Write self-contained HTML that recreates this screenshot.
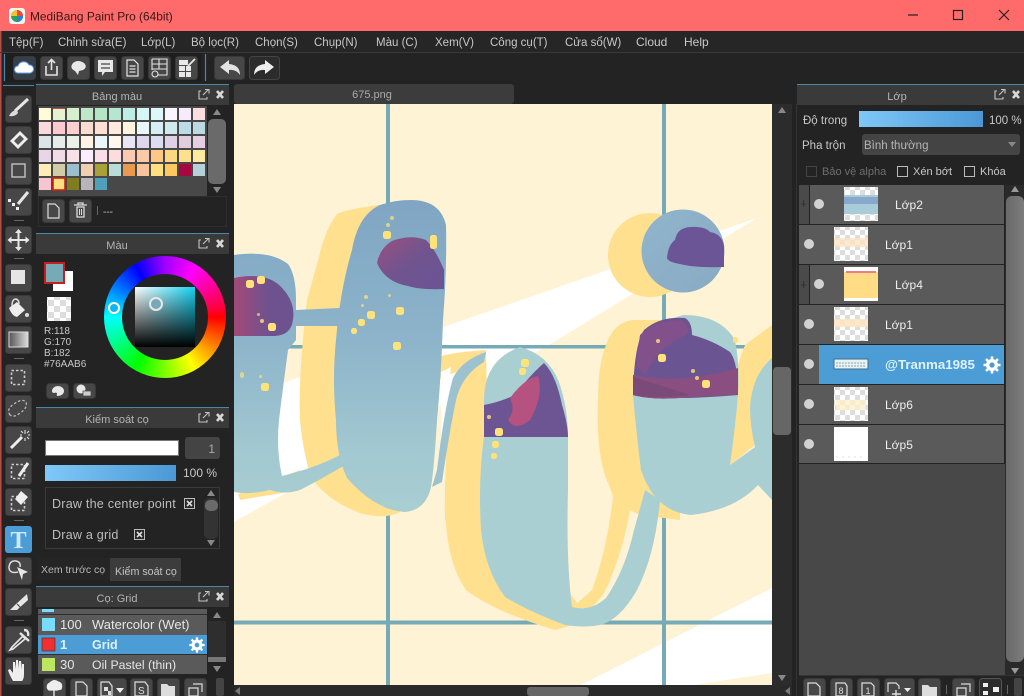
<!DOCTYPE html>
<html><head><meta charset="utf-8"><style>
html,body{margin:0;padding:0;width:1024px;height:696px;overflow:hidden;background:#232323}
svg{position:absolute;left:0;top:0}
text{font-family:"Liberation Sans","DejaVu Sans",sans-serif;font-size:12px;fill:#c8c8c8}
.m text{font-size:11.5px}
.b{fill:#474747;stroke:#383838;stroke-width:1}
.h{fill:#3a3a3a}
.t{font-size:11px;fill:#b4b4b4;text-anchor:middle}
.i{fill:none;stroke:#e4e4e4;stroke-width:1.6}
.f{fill:#e8e8e8}
.l{font-size:12px;fill:#eee}
.n{font-size:13px;fill:#e6e6e6}
.d rect{rx:2.5px}
#wheel{position:absolute;left:104px;top:256px;width:122px;height:122px;border-radius:50%;background:conic-gradient(from 0deg,#a000ff,#ff00ff 30deg,#ff0040 80deg,#f00 90deg,#ff0 150deg,#0f0 210deg,#0ff 270deg,#00f 330deg,#a000ff 360deg)}
#wi{position:absolute;left:18px;top:18px;width:86px;height:86px;border-radius:50%;background:#232323}
#sq{position:absolute;left:31px;top:31px;width:60px;height:60px;background:linear-gradient(to bottom,rgba(0,0,0,0),#000),linear-gradient(to right,#fff,#14d2f2)}
.p{position:absolute;border:2.5px solid #eee;border-radius:50%;box-sizing:border-box}
</style></head><body>
<svg width="1024" height="696" viewBox="0 0 1024 696">
<defs>
<linearGradient id="bar" x1="0" x2="1" y1="0" y2="0"><stop offset="0" stop-color="#7fc8f8"/><stop offset="1" stop-color="#4b98d6"/></linearGradient>
<linearGradient id="sb" x1="0" x2="1" y1="0" y2="0"><stop offset="0" stop-color="#6a6a6a"/><stop offset="1" stop-color="#7c7c7c"/></linearGradient>
<linearGradient id="blue" x1="0" x2="0" y1="195" y2="520" gradientUnits="userSpaceOnUse"><stop offset="0" stop-color="#7fa5c3"/><stop offset=".45" stop-color="#8db4ca"/><stop offset=".8" stop-color="#a3c9d1"/><stop offset="1" stop-color="#a9cfd2"/></linearGradient>
<linearGradient id="circ" x1="0" x2="1" y1="0" y2="1"><stop offset="0" stop-color="#8fb5cb"/><stop offset="1" stop-color="#8aaac4"/></linearGradient>
<linearGradient id="pur" x1="0" x2="1" y1="0" y2="1"><stop offset="0" stop-color="#9a4f80"/><stop offset=".5" stop-color="#70548f"/><stop offset="1" stop-color="#6a5494"/></linearGradient>
<linearGradient id="pur2" x1="0" x2="1" y1="0" y2="0"><stop offset="0" stop-color="#a24a78"/><stop offset=".6" stop-color="#6e5290"/></linearGradient>
<linearGradient id="grad" x1="0" x2="1" y1="0" y2="0"><stop offset="0" stop-color="#555"/><stop offset="1" stop-color="#ddd"/></linearGradient>
<pattern id="ck" width="12" height="12" patternUnits="userSpaceOnUse"><rect width="12" height="12" fill="#fff"/><rect width="6" height="6" fill="#ddd"/><rect x="6" y="6" width="6" height="6" fill="#ddd"/></pattern>
<pattern id="ck2" width="10" height="10" patternUnits="userSpaceOnUse"><rect width="10" height="10" fill="#fff"/><rect width="5" height="5" fill="#ddd"/><rect x="5" y="5" width="5" height="5" fill="#ddd"/></pattern>
<g id="pop"><path d="M-5 -3H-7V5H1V3" fill="none" stroke="#c4c4c4" stroke-width="1.1"/><path d="M-3 1L2 -4M-1 -4.500H3V-.5" fill="none" stroke="#c4c4c4" stroke-width="1.1"/><path d="M11 -3L17 4M17 -3L11 4" stroke="#d8d8d8" stroke-width="2.6"/></g>
<g id="gear"><circle r="6" fill="#fff"/><g stroke="#fff" stroke-width="2.6"><path d="M0 -8.500V8.500M-8.500 0H8.500M-6 -6L6 6M-6 6L6 -6"/></g><circle r="2.600" fill="#4c9cd6"/></g>
</defs>

<!-- window frame -->
<rect width="1024" height="696" fill="#232323"/>
<rect width="1024" height="31" fill="#ff6b6b"/>
<rect x="0" y="31" width="1.5" height="665" fill="#b84a4a"/>
<rect x="9" y="8" width="16" height="16" rx="3" fill="#f4f4f4"/>
<circle cx="17" cy="16" r="6" fill="#2ea05a"/><path d="M17 10a6 6 0 0 1 6 6h-6z" fill="#e84b3a"/><path d="M17 16h6a6 6 0 0 1-6 6z" fill="#2f7fd0"/><path d="M11 16a6 6 0 0 1 6-6v6z" fill="#f2c230"/>
<text x="30" y="20.500" style="font-size:11.900px;fill:#3a1515">MediBang Paint Pro (64bit)</text>
<path d="M908 15H918" stroke="#222" stroke-width="1.2"/><rect x="953.5" y="10.5" width="9" height="9" fill="none" stroke="#222" stroke-width="1.2"/><path d="M999 10L1009 20M1009 10L999 20" stroke="#222" stroke-width="1.2"/>

<!-- menu -->
<rect y="31" width="1024" height="21" x="1.5" fill="#262626"/>
<path d="M0 52.500H1024" stroke="#3a3a3a"/>
<g class="m"><text x="9" y="46">Tệp(F)</text><text x="58" y="46">Chỉnh sửa(E)</text><text x="141" y="46">Lớp(L)</text><text x="191" y="46">Bộ lọc(R)</text><text x="255" y="46">Chọn(S)</text><text x="314" y="46">Chụp(N)</text><text x="376" y="46">Màu (C)</text><text x="435" y="46">Xem(V)</text><text x="490" y="46">Công cụ(T)</text><text x="565" y="46">Cửa sổ(W)</text></g><text x="636" y="46">Cloud</text><text x="684" y="46">Help</text>

<!-- toolbar -->
<rect x="5" y="53" width="196" height="29" fill="#1e1e1e"/>
<path d="M4.500 54V81M205.500 54V81" stroke="#4a88aa" stroke-width="1.2"/>
<g class="tb">
<rect class="b" x="13.500" y="56.500" width="22" height="23" rx="3" style="fill:#353f4a"/>
<path d="M18 73a3.500 3.500 0 0 1 0-7a6 6 0 0 1 11-1a4 4 0 0 1 1 8z" fill="#fff" stroke="#6aa6e8" stroke-width="1"/>
<rect class="b" x="40.500" y="56.500" width="22" height="23" rx="3"/>
<path d="M46 66V75H57V66M51.500 70V60M48 63L51.500 59.500L55 63" class="i"/>
<rect class="b" x="67.500" y="56.500" width="22" height="23" rx="3"/>
<path d="M73 63q5-4 11 0q4 4-1 7l-4 1l-1 4l-3-4q-6-3-2-8z" class="f"/>
<rect class="b" x="94.500" y="56.500" width="22" height="23" rx="3"/>
<path d="M98 60H113V72H105L102 76V72H98z" class="f"/><path d="M101 64H110M101 68H110" stroke="#444" stroke-width="1.2"/>
<rect class="b" x="121.500" y="56.500" width="22" height="23" rx="3"/>
<path d="M127 60H134L138 64V76H127z M129.500 66H135.500M129.500 69H135.500M129.500 72H135.500" class="i" style="stroke-width:1.2"/>
<rect class="b" x="148.500" y="56.500" width="22" height="23" rx="3"/>
<path d="M152 59H167V75H158M152 59V70M152 64H167M152 69H167M159 59V69" class="i" style="stroke-width:1.1"/><circle cx="155" cy="74" r="3" fill="none" stroke="#e4e4e4" stroke-width="1.1"/>
<rect class="b" x="175.500" y="56.500" width="22" height="23" rx="3"/>
<path d="M179 66H185V71H179zM186 66H191V71H186zM179 72H185V77H179zM186 72H191V77H186zM179 60H188V65H179z" class="f"/><path d="M188 66L195 59" stroke="#e8e8e8" stroke-width="1.8"/>
<rect class="b" x="214.500" y="56.500" width="30" height="23" rx="3"/>
<path d="M220 67L229 60V64Q240 65 240 75Q236 69 229 70V74z" fill="#e4e4e4"/>
<rect class="b" x="249.500" y="56.500" width="30" height="23" rx="3" style="fill:#2c2c2c;stroke:#444"/>
<path d="M274 67L265 60V64Q254 65 254 75Q258 69 265 70V74z" fill="#eee"/>
</g>

<!-- left tool column -->
<path d="M3 85.500H34" stroke="#4a88aa"/>
<rect class="b" x="5.500" y="95.500" width="26" height="27" rx="3"/>
<path d="M28 99L15 111" stroke="#e8e8e8" stroke-width="3"/><path d="M9 116q3-6 8-6l1 3q-3 4-9 3z" fill="#ddd"/>
<rect class="b" x="5.500" y="126.500" width="26" height="27" rx="3"/>
<path d="M20 131L28 139L18 149L10 141z" fill="#eee"/><path d="M20 135L24 139L18 145L14 141z" fill="#555"/>
<rect class="b" x="5.500" y="157.500" width="26" height="27" rx="3"/>
<rect x="12" y="164" width="13" height="13" fill="none" stroke="#bbb" stroke-width="1.5"/>
<rect class="b" x="5.500" y="188.500" width="26" height="27" rx="3"/>
<path d="M28 192L18 204" stroke="#e6e6e6" stroke-width="3"/><rect x="8" y="199" width="3" height="3" fill="#eee"/><rect x="12" y="203" width="3" height="3" fill="#eee"/><rect x="16" y="207" width="3" height="3" fill="#eee"/>
<path d="M14 220.500H24" stroke="#666"/>
<rect class="b" x="5.500" y="226.500" width="26" height="27" rx="3"/>
<path d="M18.500 230V250M8.500 240H28.500" stroke="#e8e8e8" stroke-width="2"/><path d="M18.500 229L15 233H22zM18.500 251L15 247H22zM7.500 240L11.500 236.500V243.500zM29.500 240L25.500 236.500V243.500z" fill="#e8e8e8"/>
<path d="M14 258.500H24" stroke="#666"/>
<rect class="b" x="5.500" y="264.500" width="26" height="27" rx="3"/>
<rect x="11" y="270" width="14" height="14" fill="#e6e6e6"/>
<rect class="b" x="5.500" y="295.500" width="26" height="27" rx="3"/>
<path d="M9 308L17 302L25 310L17 317Q12 316 9 308z" fill="#eee"/><path d="M12 306Q12 299 16 299Q19 300 19 304" fill="none" stroke="#ddd" stroke-width="1.5"/><circle cx="27" cy="315" r="2" fill="#ddd"/>
<rect class="b" x="5.500" y="326.500" width="26" height="27" rx="3"/>
<rect x="9" y="332" width="19" height="15" fill="url(#grad)" stroke="#ddd"/>
<path d="M14 358.500H24" stroke="#666"/>
<rect class="b" x="5.500" y="364.500" width="26" height="27" rx="3"/>
<rect x="11.500" y="370.500" width="13" height="14" fill="none" stroke="#ccc" stroke-width="1.6" stroke-dasharray="2.500 2"/>
<rect class="b" x="5.500" y="395.500" width="26" height="27" rx="3"/>
<path d="M10 415Q6 409 14 404Q22 398 26 402Q28 408 20 413Q14 418 10 415z" fill="none" stroke="#bbb" stroke-width="1.3" stroke-dasharray="2.500 2"/>
<rect class="b" x="5.500" y="426.500" width="26" height="27" rx="3"/>
<path d="M11 448L22 437" stroke="#eee" stroke-width="3"/><path d="M25 430V434M25 438V441M20 435H22M28 435H30M21 431L23 433M27 437L29 439M29 431L27 433" stroke="#ddd" stroke-width="1.1"/>
<rect class="b" x="5.500" y="457.500" width="26" height="27" rx="3"/>
<rect x="11.500" y="464.500" width="13" height="14" fill="none" stroke="#ccc" stroke-width="1.6" stroke-dasharray="2.500 2"/><path d="M19 476L28 463" stroke="#eee" stroke-width="3"/>
<rect class="b" x="5.500" y="488.500" width="26" height="27" rx="3"/>
<rect x="11.500" y="496.500" width="13" height="14" fill="none" stroke="#ccc" stroke-width="1.6" stroke-dasharray="2.500 2"/><path d="M21 491L28 497L21 505L15 499z" fill="#eee"/>
<path d="M14 520.500H24" stroke="#666"/>
<rect x="5" y="526" width="27" height="27" rx="3" fill="#4c9cd6"/>
<text x="18.500" y="548" style="font-family:'Liberation Serif',serif;font-size:24px;font-weight:bold;fill:#cfeaff;text-anchor:middle">T</text>
<rect class="b" x="5.500" y="557.500" width="26" height="27" rx="3"/>
<path d="M18 572Q9 574 9 567Q10 560 16 561Q21 562 20 567" fill="none" stroke="#ddd" stroke-width="1.5"/><path d="M17 567L28 572L23 574L22 580z" fill="#e8e8e8"/>
<rect class="b" x="5.500" y="588.500" width="26" height="27" rx="3"/>
<path d="M27 594L15 605L10 610L17 610L28 600z" fill="#e6e6e6"/><path d="M17 604L22 609" stroke="#444"/>
<path d="M14 620.500H24" stroke="#666"/>
<rect class="b" x="5.500" y="626.500" width="26" height="27" rx="3"/>
<path d="M23 636L12 647L10 650L13 649L25 639z" fill="none" stroke="#e6e6e6" stroke-width="1.6"/><path d="M20 633L29 641M24 630Q29 630 28 636" stroke="#e6e6e6" stroke-width="2.4" fill="none"/>
<rect class="b" x="5.500" y="657.500" width="26" height="27" rx="3"/>
<path d="M13 681Q9 674 8 670L10 669L13 673V662H15L16 669V660H18L19 669V661H21L22 670V664H24V674Q24 679 22 681z" fill="#eee"/>

<!-- Palette panel -->
<path d="M36 84.500H229" stroke="#4a88aa"/>
<rect class="h" x="36" y="85" width="193" height="20"/>
<text class="t" x="117" y="100">Bảng màu</text>
<use href="#pop" x="206" y="94"/>
<rect x="38" y="106" width="169" height="90" fill="#484848"/>
<g>
<rect x="39" y="108" width="12" height="12" fill="#fffbd9"/><rect x="53" y="108" width="12" height="12" fill="#e4f2d2"/><rect x="67" y="108" width="12" height="12" fill="#d6f0ce"/><rect x="81" y="108" width="12" height="12" fill="#bfe8c9"/><rect x="95" y="108" width="12" height="12" fill="#b4e6c5"/><rect x="109" y="108" width="12" height="12" fill="#b5e6d0"/><rect x="123" y="108" width="12" height="12" fill="#bdeee6"/><rect x="137" y="108" width="12" height="12" fill="#d6f6f6"/><rect x="151" y="108" width="12" height="12" fill="#def7fa"/><rect x="165" y="108" width="12" height="12" fill="#f8f6fe"/><rect x="179" y="108" width="12" height="12" fill="#f6eafb"/><rect x="193" y="108" width="12" height="12" fill="#fbdde0"/>
<rect x="39" y="122" width="12" height="12" fill="#fbd8dc"/><rect x="53" y="122" width="12" height="12" fill="#fbc9cf"/><rect x="67" y="122" width="12" height="12" fill="#fbd0ce"/><rect x="81" y="122" width="12" height="12" fill="#fbdcd0"/><rect x="95" y="122" width="12" height="12" fill="#fde0d2"/><rect x="109" y="122" width="12" height="12" fill="#feeadc"/><rect x="123" y="122" width="12" height="12" fill="#fff4de"/><rect x="137" y="122" width="12" height="12" fill="#e8f8fa"/><rect x="151" y="122" width="12" height="12" fill="#d6eef3"/><rect x="165" y="122" width="12" height="12" fill="#cfe9ee"/><rect x="179" y="122" width="12" height="12" fill="#bbdce6"/><rect x="193" y="122" width="12" height="12" fill="#bad9e0"/>
<rect x="39" y="136" width="12" height="12" fill="#dce6e8"/><rect x="53" y="136" width="12" height="12" fill="#e6ede9"/><rect x="67" y="136" width="12" height="12" fill="#edf0e9"/><rect x="81" y="136" width="12" height="12" fill="#fef2e6"/><rect x="95" y="136" width="12" height="12" fill="#eaf6fc"/><rect x="109" y="136" width="12" height="12" fill="#fff6ee"/><rect x="123" y="136" width="12" height="12" fill="#e8e6f6"/><rect x="137" y="136" width="12" height="12" fill="#ddd8ee"/><rect x="151" y="136" width="12" height="12" fill="#ddddf2"/><rect x="165" y="136" width="12" height="12" fill="#e0d0e6"/><rect x="179" y="136" width="12" height="12" fill="#e0cddf"/><rect x="193" y="136" width="12" height="12" fill="#e5cee2"/>
<rect x="39" y="150" width="12" height="12" fill="#e8d6e6"/><rect x="53" y="150" width="12" height="12" fill="#f0dce6"/><rect x="67" y="150" width="12" height="12" fill="#f8dfe8"/><rect x="81" y="150" width="12" height="12" fill="#fbedfb"/><rect x="95" y="150" width="12" height="12" fill="#fbdde8"/><rect x="109" y="150" width="12" height="12" fill="#fcdcdc"/><rect x="123" y="150" width="12" height="12" fill="#fbc9b0"/><rect x="137" y="150" width="12" height="12" fill="#fbc8a8"/><rect x="151" y="150" width="12" height="12" fill="#fbc888"/><rect x="165" y="150" width="12" height="12" fill="#fbd880"/><rect x="179" y="150" width="12" height="12" fill="#fce090"/><rect x="193" y="150" width="12" height="12" fill="#ffe9a0"/>
<rect x="39" y="164" width="12" height="12" fill="#ffedb8"/><rect x="53" y="164" width="12" height="12" fill="#d0cca8"/><rect x="67" y="164" width="12" height="12" fill="#9cbfd0"/><rect x="81" y="164" width="12" height="12" fill="#f0cfb0"/><rect x="95" y="164" width="12" height="12" fill="#a8a038"/><rect x="109" y="164" width="12" height="12" fill="#b8dcd8"/><rect x="123" y="164" width="12" height="12" fill="#e89a50"/><rect x="137" y="164" width="12" height="12" fill="#f9c49c"/><rect x="151" y="164" width="12" height="12" fill="#fee080"/><rect x="165" y="164" width="12" height="12" fill="#fdc860"/><rect x="179" y="164" width="12" height="12" fill="#a80840"/><rect x="193" y="164" width="12" height="12" fill="#b8d0d8"/>
<rect x="39" y="178" width="12" height="12" fill="#f6c4d2"/><rect x="53" y="178" width="12" height="12" fill="#ffe080"/><rect x="67" y="178" width="12" height="12" fill="#7e7e20"/><rect x="81" y="178" width="12" height="12" fill="#b8b4bc"/><rect x="95" y="178" width="12" height="12" fill="#50a0bc"/>
<rect x="53" y="178" width="12" height="12" fill="none" stroke="#d02010" stroke-width="1.6"/>
<path d="M53 108.500H65" stroke="#c84a40" stroke-width="1"/>
</g>
<path d="M217 109L213 115H221zM217 193L213 187H221z" fill="#888"/>
<rect x="208" y="119" width="18" height="65" rx="5" fill="#6a6a6a"/>
<rect x="38.500" y="196.500" width="188" height="30" fill="none" stroke="#2e2e2e"/>
<rect class="b" x="42.500" y="199.500" width="22" height="23" rx="3"/>
<path d="M48 204H55L59 208V218H48z" fill="none" stroke="#ddd" stroke-width="1.2"/>
<rect class="b" x="69.500" y="199.500" width="22" height="23" rx="3"/>
<path d="M74 205H87M77 207H84V217H77zM78 205V203H83V205" fill="none" stroke="#ddd" stroke-width="1.3"/><path d="M79.500 209V215M81.500 209V215" stroke="#ddd"/>
<path d="M97.500 206V215" stroke="#666"/><text x="103" y="215" style="font-size:10px">---</text>

<!-- Color panel -->
<path d="M36 233.500H229" stroke="#4a88aa"/>
<rect class="h" x="36" y="234" width="193" height="20"/>
<text class="t" x="117" y="249">Màu</text>
<use href="#pop" x="206" y="243"/>
<rect x="53" y="271" width="20" height="20" fill="#fff"/>
<rect x="45" y="263" width="19" height="20" fill="#76aab6" stroke="#c81e1e" stroke-width="2"/>
<rect x="47" y="297" width="24" height="24" fill="url(#ck)"/>
<g style="font-size:10px"><text x="44" y="334" style="font-size:10px">R:118</text><text x="44" y="345" style="font-size:10px">G:170</text><text x="44" y="356" style="font-size:10px">B:182</text><text x="44" y="367" style="font-size:10px">#76AAB6</text></g>
<rect class="b" x="46.500" y="383.500" width="22" height="15" rx="3"/>
<path d="M52 391a6 5 0 1 1 6 5q-2 0-1-2q0-2-3-1q-2 0-2-2z" fill="#e8e8e8"/>
<rect class="b" x="73.500" y="383.500" width="22" height="15" rx="3"/>
<circle cx="81" cy="389" r="4.500" fill="#e8e8e8"/><rect x="83" y="391" width="8" height="5" fill="#ccc" stroke="#444" stroke-width=".7"/>

<!-- Brush control -->
<path d="M36 407.500H229" stroke="#4a88aa"/>
<rect class="h" x="36" y="408" width="193" height="20"/>
<text class="t" x="117" y="423">Kiểm soát cọ</text>
<use href="#pop" x="206" y="417"/>
<rect x="45.500" y="440.500" width="133" height="15" fill="#fff" stroke="#777"/>
<rect x="185" y="437" width="35" height="22" rx="3" fill="#444"/>
<text x="215" y="453" style="font-size:12px;text-anchor:end;fill:#aaa">1</text>
<rect x="45" y="465" width="131" height="16" fill="url(#bar)"/>
<text x="183" y="477" style="font-size:12px">100 %</text>
<rect x="45.500" y="487.500" width="174" height="61" fill="none" stroke="#3a3a3a"/>
<text x="52" y="508" style="font-size:12.600px;letter-spacing:.2px;fill:#bcbcbc">Draw the center point</text>
<rect x="184.500" y="498.500" width="10" height="10" fill="#2a2a2a" stroke="#bbb"/><path d="M187 501L192 506M192 501L187 506" stroke="#ddd" stroke-width="1.6"/>
<text x="52" y="539" style="font-size:12.600px;letter-spacing:.2px;fill:#bcbcbc">Draw a grid</text>
<rect x="134.500" y="529.500" width="10" height="10" fill="#2a2a2a" stroke="#bbb"/><path d="M137 532L142 537M142 532L137 537" stroke="#ddd" stroke-width="1.6"/>
<rect x="204" y="498" width="14" height="41" rx="5" fill="#333"/>
<rect x="205" y="500" width="13" height="11" rx="5" fill="#6a6a6a"/>
<path d="M211 490L207 496H215zM211 546L207 540H215z" fill="#888"/>
<rect x="37" y="558" width="73" height="22" fill="#252525"/>
<text x="41" y="573" style="font-size:10.500px;fill:#b8b8b8">Xem trước cọ</text>
<rect x="110" y="558" width="71" height="23" fill="#3c3c3c"/>
<text x="115" y="575" style="font-size:10.700px;fill:#c4c4c4">Kiểm soát cọ</text>

<!-- Brush panel -->
<path d="M36 586.500H229" stroke="#4a88aa"/>
<rect class="h" x="36" y="587" width="193" height="20"/>
<text class="t" x="117" y="602">Cọ: Grid</text>
<use href="#pop" x="206" y="596"/>
<rect x="38" y="609" width="169" height="65" fill="#5a5a5a"/>
<rect x="42" y="609" width="12" height="3" fill="#7adcff"/>
<path d="M38 614.500H207M38 654.500H207" stroke="#2e2e2e"/>
<rect x="42" y="618" width="13" height="13" fill="#78dcff"/>
<text class="n" x="60" y="629">100</text><text class="n" x="92" y="629">Watercolor (Wet)</text>
<rect x="38" y="635" width="169" height="19" fill="#4c9cd6"/>
<rect x="42" y="638" width="13" height="13" fill="#f03030" stroke="#333" stroke-width=".6"/>
<text class="n" x="60" y="649" style="font-weight:bold;fill:#dff2ff">1</text><text class="n" x="92" y="649" style="font-size:12.500px;font-weight:bold;fill:#dff2ff">Grid</text>
<use href="#gear" transform="translate(197 645) scale(.9)"/>
<rect x="42" y="658" width="13" height="13" fill="#bce860"/>
<text class="n" x="60" y="669">30</text><text class="n" x="92" y="669" style="font-size:12.300px">Oil Pastel (thin)</text>
<path d="M217 612L213 618H221zM217 672L213 666H221z" fill="#888"/>
<rect x="208" y="621" width="18" height="40" fill="#2e2e2e"/><rect x="208" y="657" width="18" height="5" fill="#777"/>
<rect class="b" x="43.500" y="678.500" width="22" height="22" rx="3"/>
<path d="M49 690a4 4 0 0 1 1-7q4-4 8-1q5 1 3 7l-4 1zM54 688V696" fill="#eee" stroke="#eee" stroke-width="1.3"/>
<rect class="b" x="70.500" y="678.500" width="22" height="22" rx="3"/>
<path d="M76 682H83L87 686V696H76z" fill="none" stroke="#ddd" stroke-width="1.2"/>
<rect class="b" x="97.500" y="678.500" width="29" height="22" rx="3"/>
<path d="M101 682H109L112 686V696H101z" fill="none" stroke="#ddd" stroke-width="1.2"/><rect x="104" y="687" width="4" height="4" fill="#ddd"/><rect x="108" y="691" width="3" height="4" fill="#ddd"/><path d="M116 688H124L120 693z" fill="#eee"/>
<rect class="b" x="130.500" y="678.500" width="22" height="22" rx="3"/>
<path d="M135 682H145L148 686V696H135z" fill="none" stroke="#ddd" stroke-width="1.2"/><text x="138" y="694" style="font-size:10px;fill:#ddd">S</text>
<rect class="b" x="157.500" y="678.500" width="22" height="22" rx="3"/>
<path d="M161 684H167L169 686H175V696H161z" fill="#ddd"/>
<rect class="b" x="184.500" y="678.500" width="22" height="22" rx="3"/>
<path d="M189 688H198V696H189zM193 684H202V692" fill="none" stroke="#ddd" stroke-width="1.2"/>
<rect x="216" y="678" width="8" height="18" rx="2" fill="#444"/>

<!-- tab bar + scrollbars -->
<rect x="234" y="84" width="280" height="20" rx="3" fill="#3c3c3c"/>
<text x="372" y="98" style="font-size:11px;fill:#aaa;text-anchor:middle">675.png</text>
<rect x="772" y="104" width="20" height="581" fill="#2c2c2c"/>
<rect x="773" y="367" width="18" height="68" rx="4" fill="#666"/>
<path d="M782 107L778 113H786zM782 681L778 675H786z" fill="#888"/>
<rect x="234" y="685" width="558" height="11" fill="#2a2a2a"/>
<rect x="527" y="687" width="62" height="9" rx="3" fill="#666"/>
<path d="M240 687L235 691L240 695zM785 691L790 695V687z" fill="#777"/>

<!-- canvas -->
<svg x="234" y="104" width="538" height="581" viewBox="234 104 538 581">
<rect x="234" y="104" width="538" height="581" fill="#fff3d6"/>
<path d="M757 218L234 400V522L552 343z" fill="#fff"/>
<path d="M581 685L772 588V685z" fill="#fff"/>
<path d="M694 685L772 673V685z" fill="#fff3d6"/>
<g fill="#76aab6"><rect x="386" y="104" width="4" height="581"/><rect x="662" y="104" width="4" height="581"/><rect x="234" y="345" width="538" height="3.500"/><rect x="234" y="620.500" width="538" height="4"/></g>
<!-- yellow -->
<g fill="#ffe08f">
<path d="M395 203Q350 208 337 214Q325 230 319 257L307 300Q298 380 300 420Q302 445 310 475Q325 500 360 513Q385 520 400 512L400 203z"/>
<path d="M238 494Q262 484 281 477L300 470V490L240 500z"/>
<circle cx="650" cy="255" r="42"/>
<path d="M437 357Q455 352 486 350L490 520H445Q444 470 449 420Q452 385 458 372Q447 374 437 380z"/>
<path d="M445 500Q445 560 466 590Q495 612 555 630L590 620L500 500z"/>
<path d="M640 320Q615 318 606 345Q598 365 598 400Q596 450 606 478Q612 492 613 497Q607 550 592 590L572 608H590Q603 600 612 575Q624 545 630 510L640 515L680 520L680 320z"/>
<path d="M772 325L745 345Q735 370 730 400L730 465L755 445L750 407L772 358zM755 465L772 495V455z"/>
</g>
<!-- wedge between strap and B -->
<path d="M441 372L451 367L447 400L441 470z" fill="#fff"/>
<!-- blue -->
<g fill="url(#blue)">
<path d="M234 255Q270 250 288 264Q296 275 296 300V310L340 308L338 326L296 326V340L288 350Q282 395 279 420Q276 450 282 476Q315 468 340 455L345 465Q320 480 300 490Q285 495 270 490Q250 495 234 492z"/>
<path d="M411 200Q440 200 446 225Q447 270 443 320Q441 380 437 420Q434 470 431 487Q426 510 405 512Q375 510 347 478Q336 455 336 420Q332 380 336 340Q340 290 352 250Q358 215 380 205Q395 200 411 200z"/>
</g>
<g fill="#a9cfd2">
<path d="M520 347Q550 355 560 385Q568 410 568 437L568 490Q566 560 572 607Q590 612 606 598Q625 570 634 530Q641 505 645 490L660 500Q655 555 637 590Q620 620 600 625Q585 628 565 625Q530 612 505 597Q485 570 481 530Q478 480 484 436L484 400Q484 360 520 347z"/>
<path d="M684 315Q720 315 735 340Q740 365 738 395Q735 430 730 465L755 447Q750 425 750 407Q752 375 772 358V500L758 485Q735 510 691 515Q655 512 641 470Q636 430 633 395Q636 325 684 315z"/>
</g>
<path d="M486 352Q462 360 453 378Q444 410 437 470L432 487L442 482Q448 440 456 400Q462 375 484 362z" fill="#9dc2cf"/>
<circle cx="683" cy="251" r="41.500" fill="url(#circ)"/>
<!-- purple -->
<path d="M667 258Q668 245 675 240Q677 228 690 227Q705 226 710 232Q722 234 724 246L724 267Q695 268 680 264Q668 262 667 258z" fill="#6b5596"/>
<path d="M377 263Q380 248 392 241Q410 234 426 240Q436 250 444 270L444 289Q420 290 408 286Q385 282 377 263z" fill="url(#pur)"/>
<path d="M234 278Q262 272 278 284Q296 300 293 320Q291 335 275 336L234 336z" fill="url(#pur2)"/>
<path d="M484 437V405Q500 402 515 395Q530 375 544 363Q556 375 562 405Q568 425 568 437z" fill="#6d5492"/>
<path d="M510 398Q525 378 538 376Q544 395 530 420Q515 432 508 420Q516 410 510 398z" fill="#b5527f"/>
<path d="M633 395Q634 345 644 330Q660 316 685 318Q692 322 692 335Q712 340 730 352Q738 362 738 395Q700 398 680 398Q650 400 633 395z" fill="#6b5492"/>
<path d="M640 335Q655 320 682 320Q692 330 686 335Q660 345 645 375L636 365z" fill="#82508a"/>
<path d="M633 375Q680 385 738 368V395Q700 396 680 398Q650 400 633 395z" fill="#8a4f80"/>
<path d="M633 377Q660 385 690 395Q660 399 633 395z" fill="#7a4a78"/>
<!-- dots -->
<g fill="#ffe27a" class="d">
<rect x="383" y="231" width="8" height="8"/><rect x="430" y="235" width="7" height="14"/><rect x="386" y="223" width="4" height="4" opacity=".7"/><rect x="390" y="216" width="4" height="4" opacity=".7"/>
<rect x="367" y="311" width="8" height="8"/><rect x="358" y="319" width="7" height="7"/><rect x="351" y="328" width="6" height="6"/><rect x="396" y="307" width="8" height="8"/><rect x="393" y="342" width="8" height="8"/><rect x="361" y="304" width="3" height="3" opacity=".7"/><rect x="364" y="295" width="4" height="4" opacity=".7"/><rect x="388" y="294" width="3" height="3" opacity=".7"/>
<rect x="246" y="280" width="8" height="8"/><rect x="257" y="276" width="8" height="8"/><rect x="268" y="323" width="8" height="8"/><rect x="260" y="319" width="4" height="4" opacity=".8"/><rect x="257" y="313" width="3" height="3" opacity=".7"/><rect x="261" y="383" width="8" height="8"/><rect x="259" y="375" width="3" height="3" opacity=".7"/><rect x="240" y="372" width="4" height="6" opacity=".7"/>
<rect x="495" y="428" width="8" height="8"/><rect x="492" y="441" width="7" height="7"/><rect x="491" y="453" width="6" height="6"/><rect x="487" y="415" width="4" height="4" opacity=".8"/>
<rect x="658" y="354" width="8" height="8"/><rect x="656" y="339" width="4" height="4" opacity=".8"/><rect x="702" y="380" width="8" height="8"/><rect x="695" y="376" width="4" height="4" opacity=".8"/><rect x="691" y="369" width="4" height="4" opacity=".8"/><rect x="733" y="337" width="5" height="6"/>
<rect x="521" y="359" width="8" height="8"/><rect x="519" y="368" width="7" height="7"/>
</g>
</svg>

<!-- Right panel -->
<path d="M797 84.500H1024" stroke="#4a88aa"/>
<rect class="h" x="797" y="85" width="227" height="20"/>
<text class="t" x="897" y="100">Lớp</text>
<use href="#pop" x="1002" y="94"/>
<text x="803" y="124" style="font-size:11.500px">Độ trong</text>
<rect x="859" y="111" width="124" height="16" fill="url(#bar)"/>
<text x="989" y="124" style="font-size:11.500px">100 %</text>
<text x="802" y="149" style="font-size:11.500px">Pha trộn</text>
<rect x="862" y="134" width="158" height="21" rx="3" fill="#444"/>
<text x="864" y="149" style="font-size:11.500px;fill:#b4b4b4">Bình thường</text>
<path d="M1008 142H1016L1012 147z" fill="#888"/>
<rect x="806.500" y="166.500" width="10" height="10" fill="none" stroke="#444"/>
<text x="822" y="175" style="font-size:11px;fill:#6e6e6e">Bảo vệ alpha</text>
<rect x="897.500" y="166.500" width="10" height="10" fill="none" stroke="#bbb"/>
<text x="913" y="175" style="font-size:11px">Xén bớt</text>
<rect x="964.500" y="166.500" width="10" height="10" fill="none" stroke="#bbb"/>
<text x="980" y="175" style="font-size:11px">Khóa</text>

<rect x="799" y="185" width="206" height="491" fill="#484848"/>
<rect x="799" y="185" width="205" height="39" fill="#5a5a5a"/>
<rect x="799" y="225" width="205" height="39" fill="#5a5a5a"/>
<rect x="799" y="265" width="205" height="39" fill="#5a5a5a"/>
<rect x="799" y="305" width="205" height="39" fill="#5a5a5a"/>
<rect x="799" y="345" width="205" height="39" fill="#5a5a5a"/>
<rect x="799" y="385" width="205" height="39" fill="#5a5a5a"/>
<rect x="799" y="425" width="205" height="38" fill="#5a5a5a"/>
<rect x="799" y="185" width="10" height="39" fill="#4a4a4a"/><rect x="799" y="265" width="10" height="39" fill="#4a4a4a"/>
<path d="M809.500 185V224M809.500 265V304M1004.500 185V464" stroke="#222"/>
<path d="M799 224.500H1005M799 264.500H1005M799 304.500H1005M799 344.500H1005M799 384.500H1005M799 424.500H1005M799 463.500H1005" stroke="#222"/>
<path d="M801 204H806M803.500 200V207M801 285H806M803.500 281V288" stroke="#333"/>
<rect x="819" y="345" width="185" height="39" fill="#4c9cd6"/>
<g fill="#d2d2d2"><circle cx="819" cy="204" r="5"/><circle cx="809" cy="244" r="5"/><circle cx="819" cy="284" r="5"/><circle cx="809" cy="324" r="5"/><circle cx="809" cy="364" r="5"/><circle cx="809" cy="404" r="5"/><circle cx="809" cy="444" r="5"/></g>
<!-- thumbs -->
<rect x="844" y="187" width="34" height="34" fill="url(#ck2)"/><rect x="844" y="195" width="34" height="19" fill="#a9cdd8"/><rect x="844" y="197" width="34" height="7" fill="#88a8cc"/>
<rect x="834" y="227" width="34" height="34" fill="url(#ck2)"/><rect x="834" y="238" width="34" height="9" fill="#fde4c0" opacity=".8"/>
<rect x="844" y="267" width="34" height="34" fill="#fff"/><rect x="844" y="272" width="34" height="26" fill="#ffdc85"/><rect x="846" y="271" width="30" height="2" fill="#ee7a8a"/>
<rect x="834" y="307" width="34" height="34" fill="url(#ck2)"/><rect x="834" y="319" width="34" height="8" fill="#fde4c0" opacity=".85"/>
<rect x="834" y="359" width="34" height="10" fill="#e8f2f4" stroke="#3d6f8a"/><path d="M836 363H866M836 366H866" stroke="#8aa8b0" stroke-dasharray="2 1"/>
<rect x="834" y="387" width="34" height="34" fill="url(#ck2)"/><rect x="836" y="400" width="30" height="10" fill="#fff0cc" opacity=".8"/>
<rect x="834" y="427" width="34" height="34" fill="#fff"/><path d="M836 457H866" stroke="#ddd" stroke-dasharray="2 4"/>
<text class="l" x="895" y="209">Lớp2</text>
<text class="l" x="885" y="249">Lớp1</text>
<text class="l" x="895" y="289">Lớp4</text>
<text class="l" x="885" y="329">Lớp1</text>
<text x="885" y="369" style="font-size:13.300px;font-weight:bold;fill:#dff2ff">@Tranma1985</text>
<text class="l" x="885" y="409">Lớp6</text>
<text class="l" x="885" y="449">Lớp5</text>
<use href="#gear" transform="translate(992 365)"/>
<rect x="1005" y="185" width="19" height="491" fill="#2a2a2a"/>
<rect x="1006" y="196" width="18" height="466" rx="6" fill="url(#sb)"/>
<path d="M1015 186L1011 192H1019zM1015 674L1011 668H1019z" fill="#999"/>
<path d="M796.500 104V696" stroke="#333"/>
<path d="M799 675.500H1024" stroke="#333"/>
<rect class="b" x="803.500" y="678.500" width="22" height="22" rx="3"/>
<path d="M808 683H816L820 687V696H808z" fill="none" stroke="#ddd" stroke-width="1.2"/>
<rect class="b" x="830.500" y="678.500" width="22" height="22" rx="3"/>
<path d="M836 683H845L847 686V696H836z" fill="none" stroke="#ddd" stroke-width="1.2"/><text x="838.500" y="694" style="font-size:9px;fill:#ddd">8</text>
<rect class="b" x="857.500" y="678.500" width="22" height="22" rx="3"/>
<path d="M862 683H871L874 686V696H862z" fill="none" stroke="#ddd" stroke-width="1.2"/><text x="865.500" y="694" style="font-size:9px;fill:#ddd">1</text>
<rect class="b" x="884.500" y="678.500" width="30" height="22" rx="3"/>
<path d="M888 692V683H896L899 686V689" fill="none" stroke="#ddd" stroke-width="1.2"/><path d="M896 690V696M892 694H901" stroke="#ddd" stroke-width="1.4"/><path d="M904 688H911L907.500 692z" fill="#eee"/>
<rect class="b" x="918.500" y="678.500" width="22" height="22" rx="3"/>
<path d="M922 685H928L930 687H937V696H922z" fill="#ddd"/>
<path d="M946.500 685V694" stroke="#666"/>
<rect class="b" x="952.500" y="678.500" width="22" height="22" rx="3"/>
<path d="M957 688H966V696H957zM961 684H970V692" fill="none" stroke="#ddd" stroke-width="1.2"/>
<rect class="b" x="979.500" y="678.500" width="22" height="22" rx="3" style="fill:#2c2c2c;stroke:#555"/>
<rect x="983" y="683" width="5" height="4" fill="#eee"/><rect x="983" y="691" width="5" height="4" fill="#eee"/><rect x="993" y="687" width="6" height="5" fill="#eee"/>
<path d="M1007.500 685V694" stroke="#666"/>
<rect x="1014" y="678" width="8" height="18" rx="2" fill="#444"/>
</svg>

<div id="wheel"><div id="wi"></div><div id="sq"></div>
<div class="p" style="left:4px;top:46px;width:12px;height:12px;background:#14b4f0;border-color:#fff"></div>
<div class="p" style="left:45px;top:41px;width:14px;height:14px;background:#76aab6;border-color:#e8e8e8"></div>
</div>
</body></html>
